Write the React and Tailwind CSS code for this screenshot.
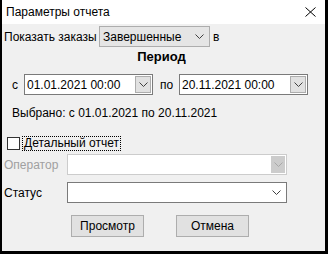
import React from "react";

const Chev = ({ color = "#404040" }) => (
  <svg width="9" height="5" viewBox="0 0 9 5" className="block">
    <path d="M0.5 0.5 L4.5 4.5 L8.5 0.5" fill="none" stroke={color} strokeWidth="1" />
  </svg>
);

export default function App() {
  return (
    <div
      className="w-[328px] h-[254px] bg-black pl-[2px] pr-[3px] pb-[3px] flex flex-col text-[12px] leading-[16px] text-black whitespace-nowrap"
      style={{ fontFamily: '"Liberation Sans", Arial, sans-serif' }}
    >
      <div className="h-[24px] shrink-0 bg-white flex items-center justify-between pl-[4px] pr-[9px]">
        <span>Параметры отчета</span>
        <svg width="11" height="10" viewBox="0 0 11 10">
          <path d="M0.5 0.5 L10.5 9.5 M10.5 0.5 L0.5 9.5" stroke="#000" strokeWidth="1" />
        </svg>
      </div>
      <div className="flex-1 bg-[#f0f0f0] flex flex-col">
        <div className="mt-[2px] h-[21px] shrink-0 flex items-center">
          <span className="ml-[2px] w-[95px]">Показать заказы</span>
          <div className="w-[111px] h-[21px] border border-[#adadad] bg-[#e5e5e5] flex items-center justify-between pl-[3px] pr-[5px]">
            <span>Завершенные</span>
            <Chev />
          </div>
          <span className="ml-[3px]">в</span>
        </div>
        <div className="mt-[2px] h-[16px] shrink-0 flex items-center justify-center font-bold text-[13px] pr-[4px]">
          Период
        </div>
        <div className="mt-[9px] h-[21px] shrink-0 flex items-center">
          <span className="ml-[10px] w-[12px]">с</span>
          <div className="w-[129px] h-[21px] border border-[#7a7a7a] bg-white flex items-center justify-between pl-[2px] pr-[1px]">
            <span>01.01.2021 00:00</span>
            <div className="w-[16px] h-[17px] bg-[#e1e1e1] border border-[#adadad] flex items-center justify-center">
              <Chev />
            </div>
          </div>
          <span className="ml-[7px] w-[19px]">по</span>
          <div className="w-[129px] h-[21px] border border-[#7a7a7a] bg-white flex items-center justify-between pl-[2px] pr-[1px]">
            <span>20.11.2021 00:00</span>
            <div className="w-[16px] h-[17px] bg-[#e1e1e1] border border-[#adadad] flex items-center justify-center">
              <Chev />
            </div>
          </div>
        </div>
        <div className="mt-[9px] h-[18px] shrink-0 flex items-center ml-[10px]">
          Выбрано: с 01.01.2021 по 20.11.2021
        </div>
        <div className="mt-[14px] h-[14px] shrink-0 flex items-center">
          <div className="ml-[5px] w-[13px] h-[13px] border border-[#333] bg-white" />
          <span className="ml-[2px] h-[15px] px-[1px] border border-dotted border-black flex items-center">
            Детальный отчет
          </span>
        </div>
        <div className="mt-[4px] h-[21px] shrink-0 flex items-center">
          <span className="ml-[2px] w-[63px] text-[#a0a0a0]">Оператор</span>
          <div className="w-[220px] h-[21px] border border-[#cccccc] bg-white flex items-center justify-end pr-[1px]">
            <div className="w-[14px] h-[17px] bg-[#cccccc] flex items-center justify-center">
              <Chev color="#a8a8a8" />
            </div>
          </div>
        </div>
        <div className="mt-[7px] h-[21px] shrink-0 flex items-center">
          <span className="ml-[2px] w-[63px]">Статус</span>
          <div className="w-[220px] h-[21px] border border-[#7a7a7a] bg-white flex items-center justify-end pr-[5px]">
            <Chev />
          </div>
        </div>
        <div className="mt-[12px] h-[22px] shrink-0 flex items-center">
          <div className="ml-[69px] w-[73px] h-[22px] border border-[#adadad] bg-[#e1e1e1] flex items-center justify-center">
            Просмотр
          </div>
          <div className="ml-[32px] w-[73px] h-[22px] border border-[#adadad] bg-[#e1e1e1] flex items-center justify-center">
            Отмена
          </div>
        </div>
      </div>
    </div>
  );
}
